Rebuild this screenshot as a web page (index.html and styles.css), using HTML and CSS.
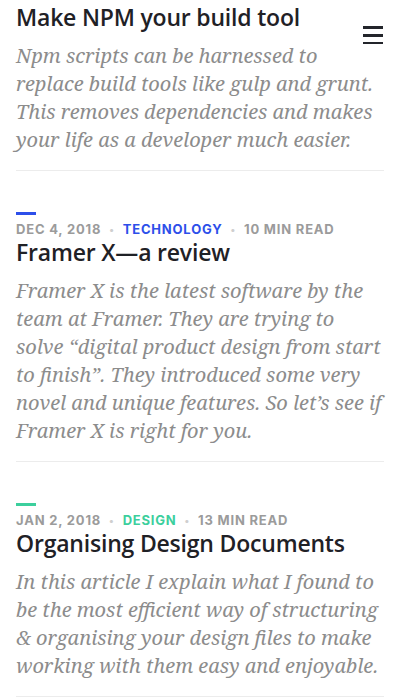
FILE: index.html
```html
<!DOCTYPE html>
<html>
<head>
<meta charset="utf-8">
<link rel="stylesheet" href="styles.css">
</head>
<body>
<button class="menu" aria-label="Menu">
  <svg width="21" height="19" viewBox="0 0 21 19"><rect x="0" y="1" width="20" height="3" fill="#23252b"/><rect x="0" y="9" width="20" height="3" fill="#23252b"/><rect x="0" y="17" width="20" height="3" fill="#23252b"/></svg>
</button>
<main class="list">
  <article class="post first">
    <h2 class="title">Make NPM your build tool</h2>
    <p class="excerpt">Npm scripts can be harnessed to replace build tools like gulp and grunt. This removes dependencies and makes your life as a developer much easier.</p>
  </article>
  <article class="post">
    <span class="bar blue"></span>
    <div class="meta"><span>Dec 4, 2018</span><span class="dot">•</span><span class="cat blue-text">Technology</span><span class="dot">•</span><span>10 min read</span></div>
    <h2 class="title">Framer X—a review</h2>
    <p class="excerpt">Framer X is the latest software by the team at Framer. They are trying to solve “digital product design from start to finish”. They introduced some very novel and unique features. So let’s see if Framer X is right for you.</p>
  </article>
  <article class="post">
    <span class="bar green"></span>
    <div class="meta"><span>Jan 2, 2018</span><span class="dot">•</span><span class="cat green-text">Design</span><span class="dot">•</span><span>13 min read</span></div>
    <h2 class="title">Organising Design Documents</h2>
    <p class="excerpt">In this article I explain what I found to be the most efficient way of structuring &amp; organising your design files to make working with them easy and enjoyable.</p>
  </article>
</main>
</body>
</html>
```
FILE: styles.css
```css
* { box-sizing: border-box; }
body {
  margin: 0;
  background: #fff;
  font-family: "Open Sans", "Noto Sans", sans-serif;
}
.menu {
  position: absolute;
  top: 25px;
  right: 16px;
  padding: 0;
  border: 0;
  background: none;
  line-height: 0;
}
.list {
  padding: 0 16px;
  display: flex;
  flex-direction: column;
}
.post {
  display: flex;
  flex-direction: column;
  padding: 41px 0 16px;
  border-bottom: 1px solid #ececec;
}
.post.first { padding-top: 2px; }
.bar {
  display: block;
  width: 20px;
  height: 3px;
}
.bar.blue { background: #2d4fea; }
.bar.green { background: #3ccf9d; }
.meta {
  margin-top: 6px;
  display: flex;
  align-items: center;
  gap: 8px;
  font-family: "Inter", "Lato", sans-serif;
  font-weight: 700;
  font-size: 13px;
  letter-spacing: 0.8px;
  text-transform: uppercase;
  color: #9b9b9b;
  line-height: 16px;
}
.dot { color: #cfcfcf; font-size: 10px; }
.blue-text { color: #2d4fea; }
.green-text { color: #3ccf9d; }
.title {
  margin: 0;
  font-weight: 600;
  font-size: 23px;
  line-height: 30px;
  color: #1f2126;
  letter-spacing: -0.2px;
}
.excerpt {
  margin: 10px 0 0;
  font-family: "Noto Serif", "DejaVu Serif", serif;
  font-style: italic;
  font-size: 20px;
  line-height: 28px;
  color: #8c8c8c;
}
.post.first .excerpt { margin-top: 10px; }
```
